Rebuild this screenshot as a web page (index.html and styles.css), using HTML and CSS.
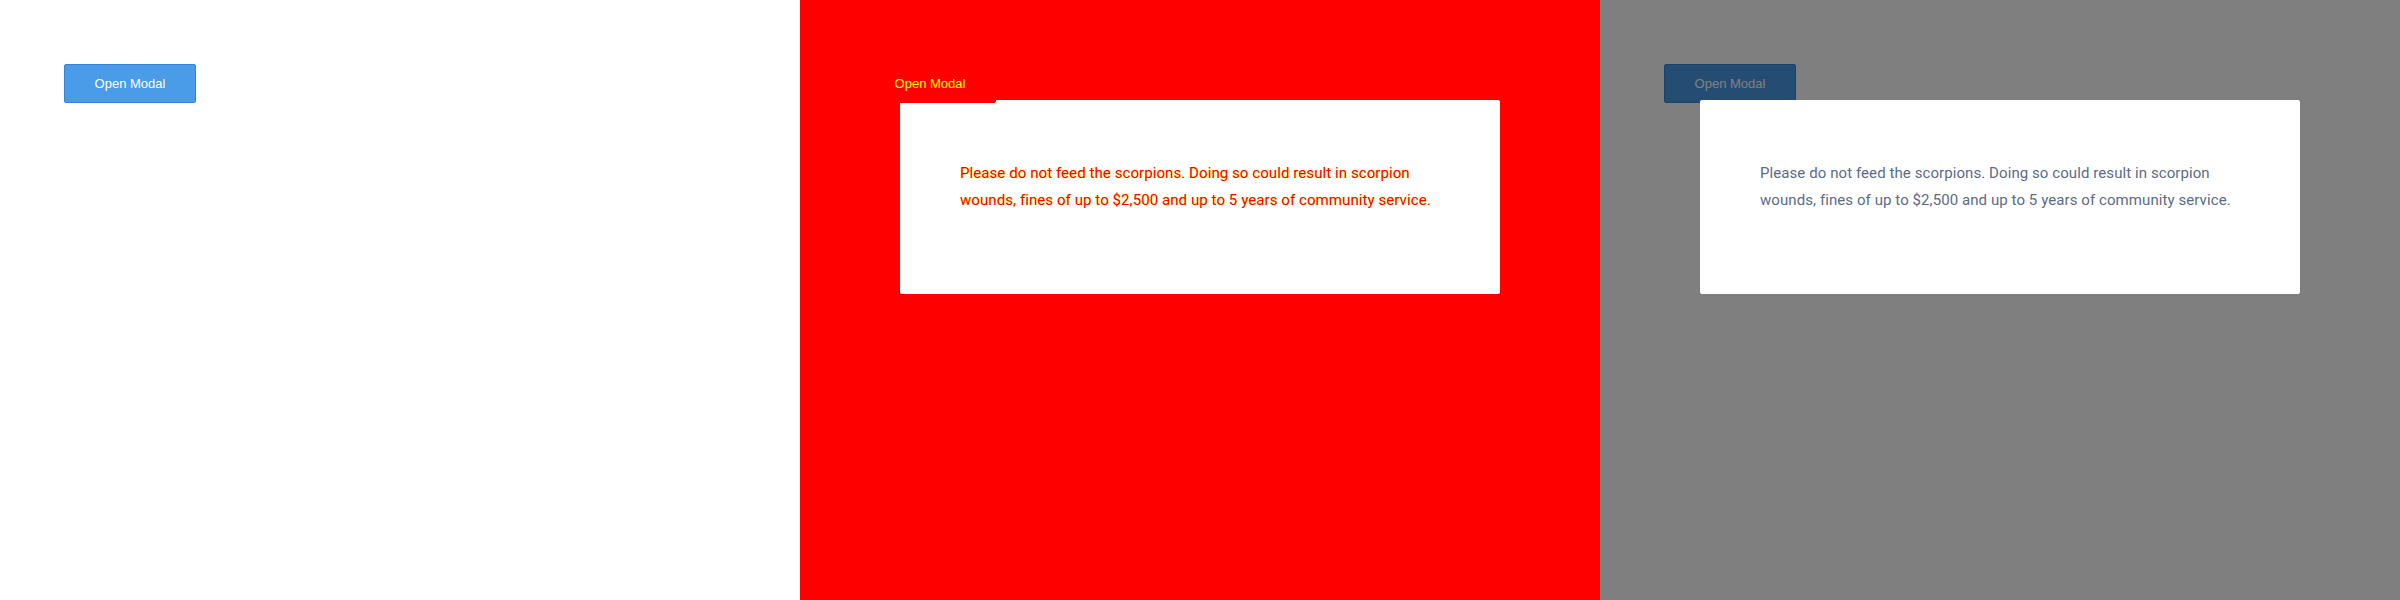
FILE: index.html
```html
<!DOCTYPE html>
<html>
<head>
<meta charset="utf-8">
<link rel="stylesheet" href="styles.css">
</head>
<body>
<div class="strip">
  <section class="panel panel-before">
    <button class="btn">Open Modal</button>
  </section>
  <section class="panel panel-diff">
    <button class="btn btn-diff">Open Modal</button>
    <div class="modal modal-diff">
      <p class="modal-text">Please do not feed the scorpions. Doing so could result in scorpion wounds, fines of up to $2,500 and up to 5 years of community service.</p>
    </div>
  </section>
  <section class="panel panel-after">
    <button class="btn">Open Modal</button>
    <div class="overlay"></div>
    <div class="modal">
      <p class="modal-text">Please do not feed the scorpions. Doing so could result in scorpion wounds, fines of up to $2,500 and up to 5 years of community service.</p>
    </div>
  </section>
</div>
</body>
</html>
```
FILE: styles.css
```css
html, body {
  margin: 0;
  padding: 0;
  background: #ffffff;
}
.strip {
  display: flex;
  width: 2400px;
  height: 600px;
}
.panel {
  position: relative;
  width: 800px;
  height: 600px;
  box-sizing: border-box;
  padding: 64px;
  background: #ffffff;
  overflow: hidden;
}
.panel-diff {
  background: #ff0000;
}
.btn {
  display: block;
  box-sizing: border-box;
  width: 132px;
  height: 39px;
  padding: 0;
  margin: 0;
  border: 1px solid #2f86d8;
  border-radius: 2px;
  background: #4a9be8;
  color: #ffffff;
  font-family: "Liberation Sans", Arial, sans-serif;
  font-size: 13px;
  line-height: 37px;
  text-align: center;
}
.btn-diff {
  position: relative;
  z-index: 2;
  background: #ff0000;
  border-color: #ff0000;
  color: #ffff00;
}
.overlay {
  position: absolute;
  inset: 0;
  background: rgba(0, 0, 0, 0.5);
}
.modal {
  position: absolute;
  left: 100px;
  top: 100px;
  width: 600px;
  height: 194px;
  box-sizing: border-box;
  padding: 60px;
  background: #ffffff;
  border-radius: 2px;
  z-index: 1;
}
.modal-text {
  margin: 0;
  font-family: Roboto, "Noto Sans", sans-serif;
  font-size: 15px;
  line-height: 27px;
  letter-spacing: 0.08px;
  color: #5b6b86;
}
.modal-diff .modal-text {
  color: #ff0000;
  text-shadow: 0 0 1px #ffff00;
}
```
